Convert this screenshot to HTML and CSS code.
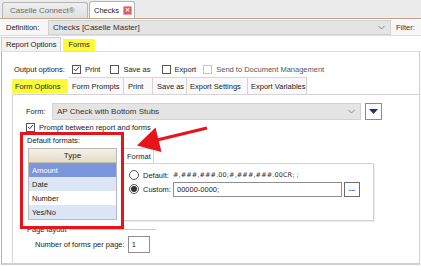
FILE: index.html
```html
<!DOCTYPE html>
<html lang="en">
<head>
    <meta charset="UTF-8">
    <title>Checks</title>
    <link rel="stylesheet" href="styles.css">
</head>
<body>
<div class="app">
    <!-- Document tabs -->
    <div class="doc-tabs">
        <div class="doc-tab first">Caselle Connect®</div>
        <div class="doc-tab active">Checks <span class="close">✕</span></div>
    </div>

    <!-- Definition -->
    <div class="def-row">
        <span class="def-label">Definition:</span>
        <div class="combo def-combo">
            <span>Checks [Caselle Master]</span>
            <svg class="chev" width="7" height="5" viewBox="0 0 7 5"><path d="M0.5 1 L3.5 4 L6.5 1" fill="none" stroke="#888" stroke-width="1"/></svg>
        </div>
        <span class="filter">Filter:</span>
    </div>

    <!-- Top level tabs -->
    <div class="main-tabs">
        <div class="main-tab">Report Options</div>
        <div class="main-tab plain"><span class="hl">Forms</span></div>
    </div>

    <div class="main-body">
        <div class="output-row">
            <span class="out-label">Output options:</span>
            <span class="opt"><span class="cb on"><svg width="8" height="8" viewBox="0 0 8 8"><path d="M1.2 4 L3.2 6 L6.8 1.6" fill="none" stroke="#333" stroke-width="1.1"/></svg></span>Print</span>
            <span class="opt"><span class="cb"></span>Save as</span>
            <span class="opt"><span class="cb"></span>Export</span>
            <span class="opt off"><span class="cb dis"></span>Send to Document Management</span>
        </div>

        <div class="sub-tabs">
            <div class="sub-tab w1 hl">Form Options</div>
            <div class="sub-tab w2">Form Prompts</div>
            <div class="sub-tab w3">Print</div>
            <div class="sub-tab w4">Save as</div>
            <div class="sub-tab w5">Export Settings</div>
            <div class="sub-tab w6">Export Variables</div>
        </div>

        <div class="sub-panel">
            <div class="form-row">
                <span class="form-label">Form:</span>
                <div class="combo form-combo">
                    <span>AP Check with Bottom Stubs</span>
                    <svg class="chev" width="7" height="5" viewBox="0 0 7 5"><path d="M0.5 1 L3.5 4 L6.5 1" fill="none" stroke="#888" stroke-width="1"/></svg>
                </div>
                <div class="drop-btn">
                    <svg width="9" height="6" viewBox="0 0 9 6"><path d="M0 0 H9 L4.5 5 Z" fill="#1d3275"/></svg>
                </div>
            </div>

            <div class="prompt-row">
                <span class="cb on"><svg width="8" height="8" viewBox="0 0 8 8"><path d="M1.2 4 L3.2 6 L6.8 1.6" fill="none" stroke="#333" stroke-width="1.1"/></svg></span>
                Prompt between report and forms
            </div>

            <div class="formats">
                <div class="types">
                    <div class="cap">Default formats:</div>
                    <div class="grid">
                        <div class="grid-head">Type</div>
                        <div class="grid-row sel">Amount</div>
                        <div class="grid-row alt">Date</div>
                        <div class="grid-row">Number</div>
                        <div class="grid-row alt">Yes/No</div>
                    </div>
                </div>
                <div class="format-box">
                    <div class="fmt-tabs"><div class="fmt-tab">Format</div></div>
                    <div class="fmt-panel">
                        <div class="fmt-row">
                            <span class="radio"></span>
                            <span class="fmt-label">Default:</span>
                            <span class="fmt-value">#,###,###.00;#,###,###.00CR; ;</span>
                        </div>
                        <div class="fmt-row">
                            <span class="radio on"></span>
                            <span class="fmt-label">Custom:</span>
                            <div class="text-box custom">00000-0000;</div>
                            <div class="dots">...</div>
                        </div>
                    </div>
                </div>
            </div>

            <div class="group">
                <span>Page layout</span>
                <span class="group-line"></span>
            </div>
            <div class="per-page">
                Number of forms per page:
                <div class="text-box count">1</div>
            </div>
        </div>
    </div>

    <!-- Annotation overlays -->
    <div class="redbox"></div>
    <svg class="arrow" width="421" height="266" viewBox="0 0 421 266">
        <line x1="207" y1="128" x2="155" y2="140.5" stroke="#e8141c" stroke-width="3.2"/>
        <polygon points="137,145.5 155.5,127.5 161.5,152" fill="#e8141c"/>
    </svg>
</div>
</body>
</html>
```

FILE: styles.css
```css
* {
    box-sizing: border-box;
}

body {
    margin: 0;
    background: #fff;
    font-family: "Liberation Sans", Arial, sans-serif;
    font-size: 7.5px;
    color: #222;
    white-space: nowrap;
    overflow: hidden;
}

.app {
    position: relative;
    width: 421px;
    height: 266px;
}

/* Document tabs */
.doc-tabs {
    height: 19px;
    display: flex;
    align-items: flex-end;
    gap: 1px;
    padding-left: 2px;
    background: #ececec;
    border-bottom: 1px solid #bfa78f;
}
.doc-tab {
    height: 16px;
    display: flex;
    align-items: center;
    padding-left: 7px;
    border: 1px solid #b5b5b5;
    border-bottom: none;
    border-radius: 3px 3px 0 0;
    background: linear-gradient(#efefef, #e0e0e0);
    color: #6a6a6a;
    font-size: 8px;
}
.doc-tab.first { width: 86px; }
.doc-tab.active {
    width: 46px;
    height: 17px;
    padding-left: 4px;
    background: #fff;
    color: #222;
    font-size: 7.5px;
}
.close {
    flex: none;
    width: 9px;
    height: 9px;
    margin-left: 4px;
    display: flex;
    align-items: center;
    justify-content: center;
    background: #e35b5b;
    border: 1px solid #f0a0a0;
    border-radius: 1px;
    color: #fff;
    font-size: 5.5px;
    font-weight: bold;
}

/* Definition */
.def-row {
    height: 17px;
    display: flex;
    align-items: center;
    padding-left: 6px;
    background: #f7f7f7;
    border-bottom: 1px solid #dcdcdc;
}
.def-label { width: 42px; }
.combo {
    display: flex;
    align-items: center;
    justify-content: space-between;
    padding: 0 5px 0 4px;
    background: #e4e4e4;
    border: 1px solid #d2d2d2;
    color: #333;
}
.def-combo {
    width: 343px;
    height: 15px;
    font-size: 8px;
}
.filter {
    margin-left: 5px;
    color: #333;
}

/* Top level tabs */
.main-tabs {
    height: 16px;
    display: flex;
    align-items: flex-end;
    padding-left: 1px;
    border-bottom: 1px solid #dddddd;
}
.main-tab {
    height: 14px;
    display: flex;
    align-items: center;
    padding: 0 4px;
    border: 1px solid #cfcfcf;
    border-bottom: none;
    background: #f3f3f3;
}
.main-tab.plain {
    border: none;
    background: none;
    padding: 0 2px;
    height: 13px;
}
.hl {
    background: #fbfb3a;
}
.main-tab .hl {
    height: 12px;
    display: flex;
    align-items: center;
    padding: 0 5px;
}

.main-body {
    height: 213px;
    margin: 0 1px;
    border-left: 1px solid #b4b4b4;
    border-right: 1px solid #cfcfcf;
    border-bottom: 2px solid #cfcfcf;
    display: flex;
    flex-direction: column;
}

/* Output options */
.output-row {
    height: 25px;
    padding: 9px 0 0 12px;
    display: flex;
    align-items: center;
}
.out-label { width: 58px; }
.opt {
    display: flex;
    align-items: center;
    margin-right: 10px;
}
.opt:nth-child(3) { margin-right: 11px; }
.opt:nth-child(4) { margin-right: 7px; }
.opt.off { color: #555; }
.cb {
    width: 9px;
    height: 9px;
    margin-right: 4px;
    border: 1px solid #555;
    background: #fff;
    display: flex;
    align-items: center;
    justify-content: center;
}
.cb.dis { border-color: #c4c4c4; }

/* Sub tabs */
.sub-tabs {
    height: 17px;
    display: flex;
    padding-left: 10px;
}
.sub-tab {
    display: flex;
    align-items: center;
    padding-left: 3px;
    border-top: 1px solid #d4d4d4;
    border-right: 1px solid #d4d4d4;
    background: #f9f9f9;
    overflow: hidden;
}
.sub-tab.hl {
    background: #fbfb3a;
    border: none;
    margin: 2px 1px 1px 0;
    padding-left: 3px;
}
.w1 { width: 56px; }
.w2 { width: 55px; }
.w3 { width: 29px; padding-left: 4px; }
.w4 { width: 34px; padding-left: 4px; }
.w5 { width: 61px; }
.w6 { width: 59px; }

.sub-panel {
    flex: 1;
    margin-left: 10px;
    padding-left: 13px;
    border-left: 1px solid #d4d4d4;
    border-top: 1px solid #d4d4d4;
}

/* Form */
.form-row {
    height: 17px;
    margin-top: 8px;
    display: flex;
    align-items: center;
}
.form-label { width: 26px; }
.form-combo {
    width: 309px;
    height: 17px;
    font-size: 8px;
}
.drop-btn {
    width: 17px;
    height: 17px;
    margin-left: 4px;
    border: 1px solid #8a8a8a;
    background: #fff;
    display: flex;
    align-items: center;
    justify-content: center;
}

.prompt-row {
    height: 12px;
    margin-top: 1px;
    display: flex;
    align-items: center;
}
.prompt-row .cb { margin-right: 4px; }

/* Default formats */
.formats {
    display: flex;
    height: 88px;
}
.types {
    width: 96px;
    padding-left: 1px;
}
.cap {
    height: 13px;
    padding-top: 3px;
}
.grid {
    width: 89px;
    margin-top: 2px;
    margin-left: 1px;
    border: 1px solid #b9b9b9;
}
.grid-head {
    height: 14px;
    display: flex;
    align-items: center;
    justify-content: center;
    background: linear-gradient(#f6f1e6, #e4dcc8);
    border-bottom: 1px solid #c8bfa8;
    font-size: 8px;
}
.grid-row {
    height: 14px;
    display: flex;
    align-items: center;
    padding-left: 3px;
    background: #fff;
}
.grid-row.alt { background: #dde6f6; }
.grid-row.sel {
    background: #7b96da;
    color: #fff;
}

.format-box {
    width: 252px;
    padding-top: 15px;
}
.fmt-tabs {
    height: 15px;
    display: flex;
}
.fmt-tab {
    width: 32px;
    padding-left: 4px;
    display: flex;
    align-items: center;
    border: 1px solid #d4d4d4;
    border-bottom: none;
    background: #fff;
}
.fmt-panel {
    height: 58px;
    padding: 4px 0 0 6px;
    border: 1px solid #d4d4d4;
    box-shadow: 1px 1px 0 #ececec;
}
.fmt-row {
    height: 14px;
    display: flex;
    align-items: center;
}
.radio {
    width: 10px;
    height: 10px;
    margin-right: 4px;
    border: 1px solid #555;
    border-radius: 50%;
    background: #fff;
    display: flex;
    align-items: center;
    justify-content: center;
}
.radio.on::after {
    content: '';
    width: 6px;
    height: 6px;
    border-radius: 50%;
    background: #333;
}
.fmt-label { width: 30px; }
.fmt-value {
    font-family: "DejaVu Sans", sans-serif;
    font-size: 6.5px;
    color: #333;
    letter-spacing: 0.1px;
}
.text-box {
    height: 15px;
    display: flex;
    align-items: center;
    padding-left: 3px;
    border: 1px solid #8f8f8f;
    background: #fff;
}
.custom { width: 169px; }
.dots {
    width: 16px;
    height: 15px;
    margin-left: 2px;
    border: 1px solid #6a6a6a;
    display: flex;
    align-items: center;
    justify-content: center;
    font-weight: bold;
    line-height: 1;
}

/* Page layout */
.group {
    height: 14px;
    display: flex;
    align-items: center;
    padding-left: 1px;
    margin-top: 1px;
}
.group-line {
    width: 86px;
    margin-left: 3px;
    border-top: 1px solid #c9c9c9;
}
.per-page {
    display: flex;
    align-items: center;
    padding-left: 9px;
}
.count {
    width: 22px;
    height: 17px;
    margin-left: 3px;
}

/* Annotations */
.redbox {
    position: absolute;
    left: 20px;
    top: 132px;
    width: 104px;
    height: 97px;
    border: 3px solid #e8141c;
}
.arrow {
    position: absolute;
    left: 0;
    top: 0;
    pointer-events: none;
}
```
